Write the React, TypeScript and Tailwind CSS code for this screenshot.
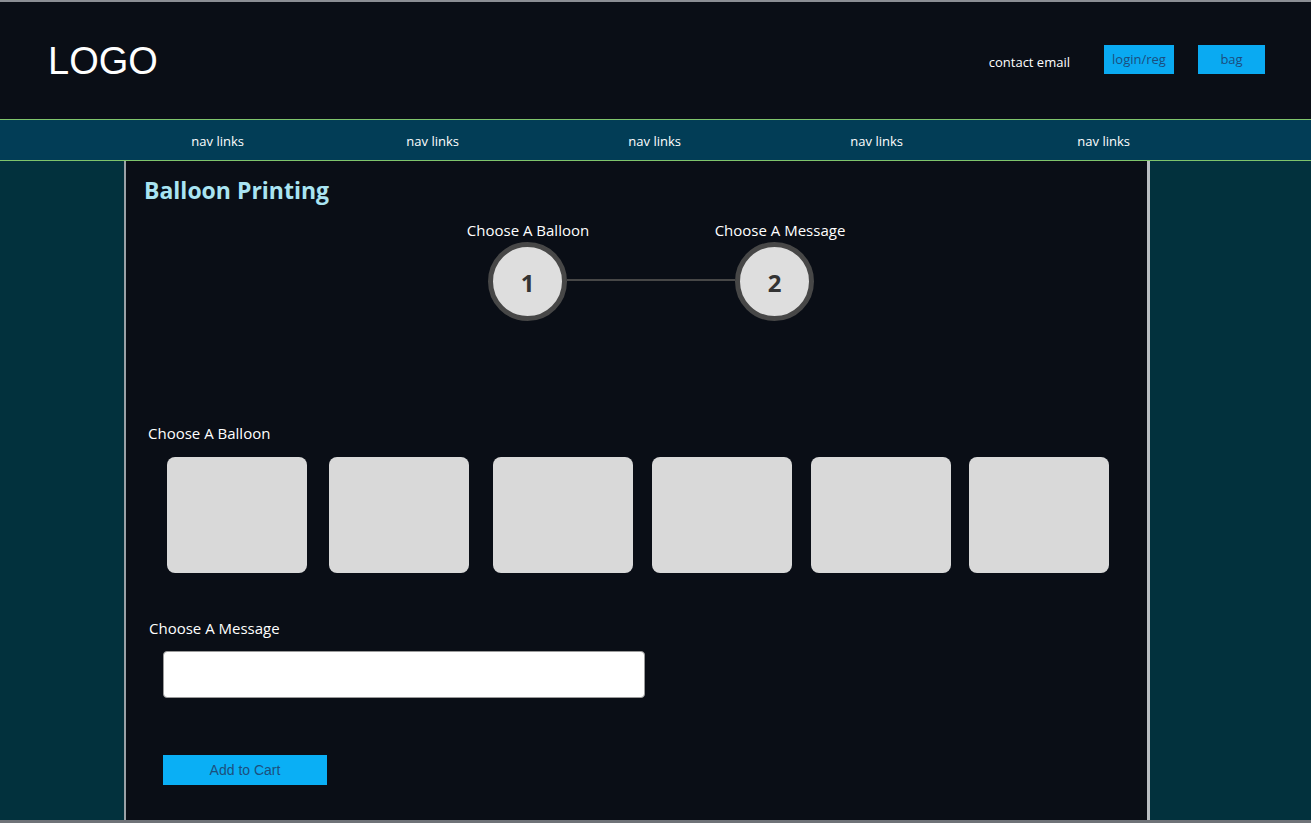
const navItems = [
  { label: 'nav links', w: 'w-[217px]' },
  { label: 'nav links', w: 'w-[215px]' },
  { label: 'nav links', w: 'w-[222px]' },
  { label: 'nav links', w: 'w-[222px]' },
  { label: 'nav links', w: 'w-[227px]' },
]

const balloonGaps = ['', 'ml-[22px]', 'ml-[24px]', 'ml-[19px]', 'ml-[19px]', 'ml-[18px]']

const StepCircle = ({ n }: { n: number }) => (
  <div className="w-[79px] h-[79px] shrink-0 rounded-full border-[5px] border-[#474747] bg-[#dedede] flex items-center justify-center text-[24px] font-bold text-[#333] pt-[2px]">
    {n}
  </div>
)

const App = () => {
  return (
    <div className="h-[823px] w-[1311px] overflow-hidden flex flex-col bg-[#0a0e16] border-t-2 border-[#8b8e94] font-['Open_Sans',sans-serif]">
      <header className="h-[117px] shrink-0 flex items-center justify-between pl-[48px] pr-[46px]">
        <div className="text-[38px] leading-none text-white font-['Liberation_Sans',sans-serif] pt-[1px]">
          LOGO
        </div>
        <div className="flex items-center pb-[2px]">
          <span className="text-[13px] text-white mr-[34px] mt-[6px]">contact email</span>
          <button
            type="button"
            className="w-[70px] h-[29px] bg-[#0aaaf2] text-[13px] text-[#1b4d7e] mr-[24px] pt-[1px]"
          >
            login/reg
          </button>
          <button
            type="button"
            className="w-[67px] h-[29px] bg-[#0aaaf2] text-[13px] text-[#1b4d7e] pt-[1px]"
          >
            bag
          </button>
        </div>
      </header>

      <nav className="h-[42px] shrink-0 bg-[#023d56] border-y border-[#7fc46c] flex items-center">
        <div className="flex pt-[4px]">
          {navItems.map((item, i) => (
            <div key={i} className={`${item.w} flex justify-end`}>
              <span className="text-[13px] text-white translate-x-[27px]">{item.label}</span>
            </div>
          ))}
        </div>
      </nav>

      <div className="flex flex-1 min-h-0 border-b-[3px] border-[#6f7378]">
        <aside className="w-[124px] shrink-0 bg-[#02313d]"></aside>

        <main className="w-[1026px] shrink-0 bg-[#0a0e16] border-l-2 border-[#9aa1a6] border-r-[3px] border-r-[#b9bec2]">
          <h1 className="pl-[18px] pt-[13px] text-[23px] leading-[32px] font-bold text-[#a9e4f2]">
            Balloon Printing
          </h1>

          <div className="mt-[14px] pl-[302px]">
            <div className="flex">
              <span className="w-[200px] text-center text-[15px] text-white leading-[20px]">Choose A Balloon</span>
              <span className="w-[200px] ml-[52px] text-center text-[15px] text-white leading-[20px]">Choose A Message</span>
            </div>
            <div className="flex items-center ml-[60px] mt-[2px]">
              <StepCircle n={1} />
              <div className="w-[168px] h-[2px] bg-[#474747] -mt-[4px]"></div>
              <StepCircle n={2} />
            </div>
          </div>

          <section className="mt-[102px] pl-[22px]">
            <h2 className="text-[15px] text-white leading-[20px]">Choose A Balloon</h2>
            <div className="mt-[14px] ml-[19px] flex">
              {balloonGaps.map((gap, n) => (
                <div key={n} className={`${gap} w-[140px] h-[116px] shrink-0 rounded-[8px] bg-[#d9d9d9]`}></div>
              ))}
            </div>
          </section>

          <section className="mt-[45px] pl-[23px]">
            <h2 className="text-[15px] text-white leading-[20px]">Choose A Message</h2>
            <input
              type="text"
              className="mt-[13px] ml-[14px] block w-[482px] h-[47px] bg-white rounded-[4px] border border-[#9a9a9a] outline-none"
            />
          </section>

          <button
            type="button"
            className="mt-[57px] ml-[37px] block w-[164px] h-[30px] bg-[#0aaff5] text-[14px] text-[#1d4f7d] font-['Liberation_Sans',sans-serif]"
          >
            Add to Cart
          </button>
        </main>

        <aside className="flex-1 bg-[#02313d]"></aside>
      </div>
    </div>
  )
}

export default App
